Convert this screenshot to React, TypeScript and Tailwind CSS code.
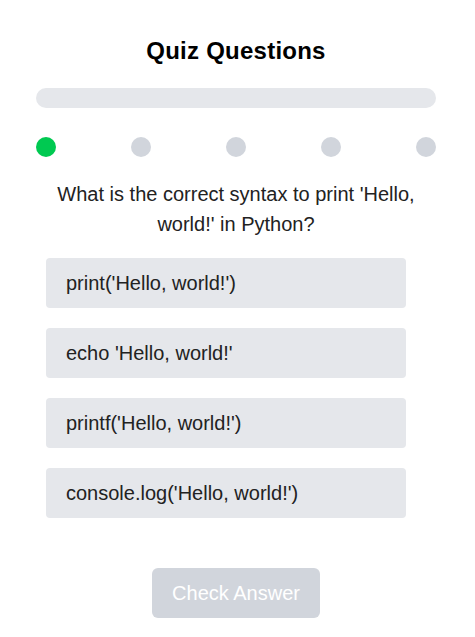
import React, { useState } from 'react';

const options = [
  "print('Hello, world!')",
  "echo 'Hello, world!'",
  "printf('Hello, world!')",
  "console.log('Hello, world!')",
];

export default function App() {
  const [selected, setSelected] = useState<number | null>(null);
  const current = 0;

  return (
    <div className="min-h-[637px] bg-white font-['Liberation_Sans',Arial,sans-serif] text-[#222]">
      <div className="w-[400px] ml-9 pt-[35px]">
        <h1 className="text-center text-2xl leading-8 font-bold text-black tracking-[0.01em]">Quiz Questions</h1>

        <div className="mt-[21px] h-5 w-full rounded-full bg-gray-200" />

        <div className="mt-[29px] flex justify-between">
          {[0, 1, 2, 3, 4].map((i) => (
            <div
              key={i}
              className={i === current ? 'size-5 rounded-full bg-green-500' : 'size-5 rounded-full bg-gray-300'}
            />
          ))}
        </div>

        <p className="mt-[22px] text-center text-xl leading-[30px]">
          What is the correct syntax to print 'Hello, world!' in Python?
        </p>

        <div className="mt-[19px] ml-2.5 w-[360px] flex flex-col gap-5">
          {options.map((opt, i) => (
            <button
              key={opt}
              onClick={() => setSelected(i)}
              className={
                selected === i
                  ? 'h-[50px] px-5 text-left text-xl rounded bg-gray-300'
                  : 'h-[50px] px-5 text-left text-xl rounded bg-gray-200'
              }
            >
              {opt}
            </button>
          ))}
        </div>

        <div className="mt-[50px] flex justify-center">
          <button
            disabled={selected === null}
            className="h-[50px] w-[168px] rounded-md bg-gray-300 text-xl text-white"
          >
            Check Answer
          </button>
        </div>
      </div>
    </div>
  );
}
